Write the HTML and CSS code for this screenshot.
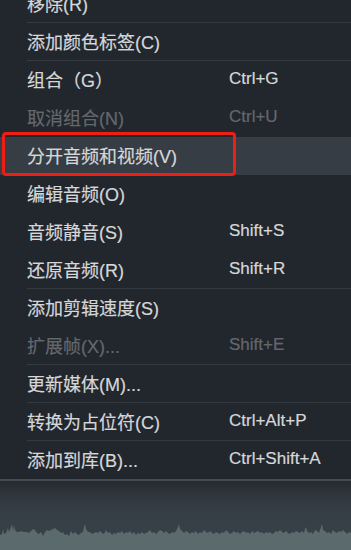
FILE: index.html
```html
<!DOCTYPE html>
<html lang="zh-CN">
<head>
<meta charset="utf-8">
<link rel="stylesheet" href="styles.css">
</head>
<body>
<div class="screen">
  <div class="menu">
    <div class="item sep"><span class="label">移除(R)</span></div>
    <div class="item sep"><span class="label">添加颜色标签(C)</span></div>
    <div class="item"><span class="label">组合（G）</span><span class="key">Ctrl+G</span></div>
    <div class="item disabled"><span class="label">取消组合(N)</span><span class="key">Ctrl+U</span></div>
    <div class="item active"><span class="label">分开音频和视频(V)</span><span class="mark"></span></div>
    <div class="item"><span class="label">编辑音频(O)</span></div>
    <div class="item"><span class="label">音频静音(S)</span><span class="key">Shift+S</span></div>
    <div class="item sep"><span class="label">还原音频(R)</span><span class="key">Shift+R</span></div>
    <div class="item"><span class="label">添加剪辑速度(S)</span></div>
    <div class="item disabled sep"><span class="label">扩展帧(X)...</span><span class="key">Shift+E</span></div>
    <div class="item sep"><span class="label">更新媒体(M)...</span></div>
    <div class="item sep"><span class="label">转换为占位符(C)</span><span class="key">Ctrl+Alt+P</span></div>
    <div class="item"><span class="label">添加到库(B)...</span><span class="key">Ctrl+Shift+A</span></div>
  </div>
  <div class="track">
    <svg class="wave" width="351" height="30" viewBox="0 0 351 30" preserveAspectRatio="none">
      <polygon fill="#5a6a6d" points="0,15 2,14 3,9 4,14 6,13 8,8 9,12 10,10 12,4 13,11 14,5 15,10 17,12 19,12 21,11 24,12 27,12 29,13 31,11 33,9 35,10 37,13 39,14 41,12 43,16 45,12 47,10 49,11 51,10 53,9 55,8 57,10 59,11 61,13 63,12 65,15 67,14 69,16 71,11 73,14 75,12 77,14 79,15 81,13 83,12 84,7 85,4 86,9 88,12 90,12 92,14 94,13 96,12 98,13 100,11 102,13 104,14 106,10 108,13 110,12 112,15 114,13 116,14 118,12 120,13 122,11 124,14 126,12 128,13 130,11 132,14 134,12 136,15 138,13 140,14 142,12 144,14 146,13 148,12 150,10 152,13 154,12 156,14 158,12 160,10 162,11 164,13 166,11 168,13 170,14 172,12 174,13 176,11 178,7 179,4 180,9 182,11 184,13 186,11 188,12 190,14 192,12 194,13 196,11 198,14 200,12 202,13 204,10 206,12 208,13 210,11 212,13 214,14 216,12 218,13 220,14 222,12 224,13 226,10 228,12 230,14 232,13 234,11 236,13 238,12 240,14 242,12 244,11 246,13 248,12 250,14 252,11 254,13 256,12 258,11 260,13 262,12 264,14 266,12 268,13 270,12 272,14 274,13 276,11 278,12 280,10 282,12 284,13 286,11 288,13 290,14 292,12 294,13 296,11 298,12 300,13 302,11 304,13 305,9 306,7 307,11 309,13 311,12 313,14 315,10 317,11 319,13 321,7 322,4 323,10 325,11 327,13 329,12 331,14 333,10 335,12 337,13 339,11 341,12 343,10 345,12 347,14 349,12 351,13 351,30 0,30"/>
    </svg>
  </div>
</div>
</body>
</html>
```

FILE: styles.css
```css
html, body {
  margin: 0;
  padding: 0;
  background: #22262d;
}

.screen {
  width: 351px;
  height: 550px;
  overflow: hidden;
  display: flex;
  flex-direction: column;
  font-family: "Liberation Sans", "Noto Sans CJK SC", sans-serif;
}

.menu {
  margin-top: -15px;
  background: #22262d;
  display: flex;
  flex-direction: column;
  border-bottom: 2px solid #464b51;
}

.item {
  position: relative;
  height: 38px;
  box-sizing: border-box;
  padding-left: 27px;
  padding-bottom: 3px;
  display: grid;
  grid-template-columns: 202px 1fr;
  align-items: center;
  font-size: 18px;
  color: #d5d7d9;
  white-space: nowrap;
  -webkit-text-stroke: 0.2px currentColor;
}

.item.sep {
  background: linear-gradient(#353a41, #353a41) 27px 100% / calc(100% - 27px) 1px no-repeat;
}

.item.disabled {
  color: #64686e;
}

.item.active {
  background: #363d44;
}

.key {
  font-size: 17px;
  color: inherit;
}

.mark {
  position: absolute;
  left: 2px;
  top: -5px;
  width: 234px;
  height: 44px;
  box-sizing: border-box;
  border: 3.5px solid #f01d14;
  border-radius: 4px;
}

.track {
  flex: 1;
  display: flex;
  flex-direction: column;
  justify-content: flex-end;
  background: linear-gradient(#252a30 0px, #2f363c 14px, #363e45 30px, #38414a 68px);
}

.wave {
  display: block;
}
```
